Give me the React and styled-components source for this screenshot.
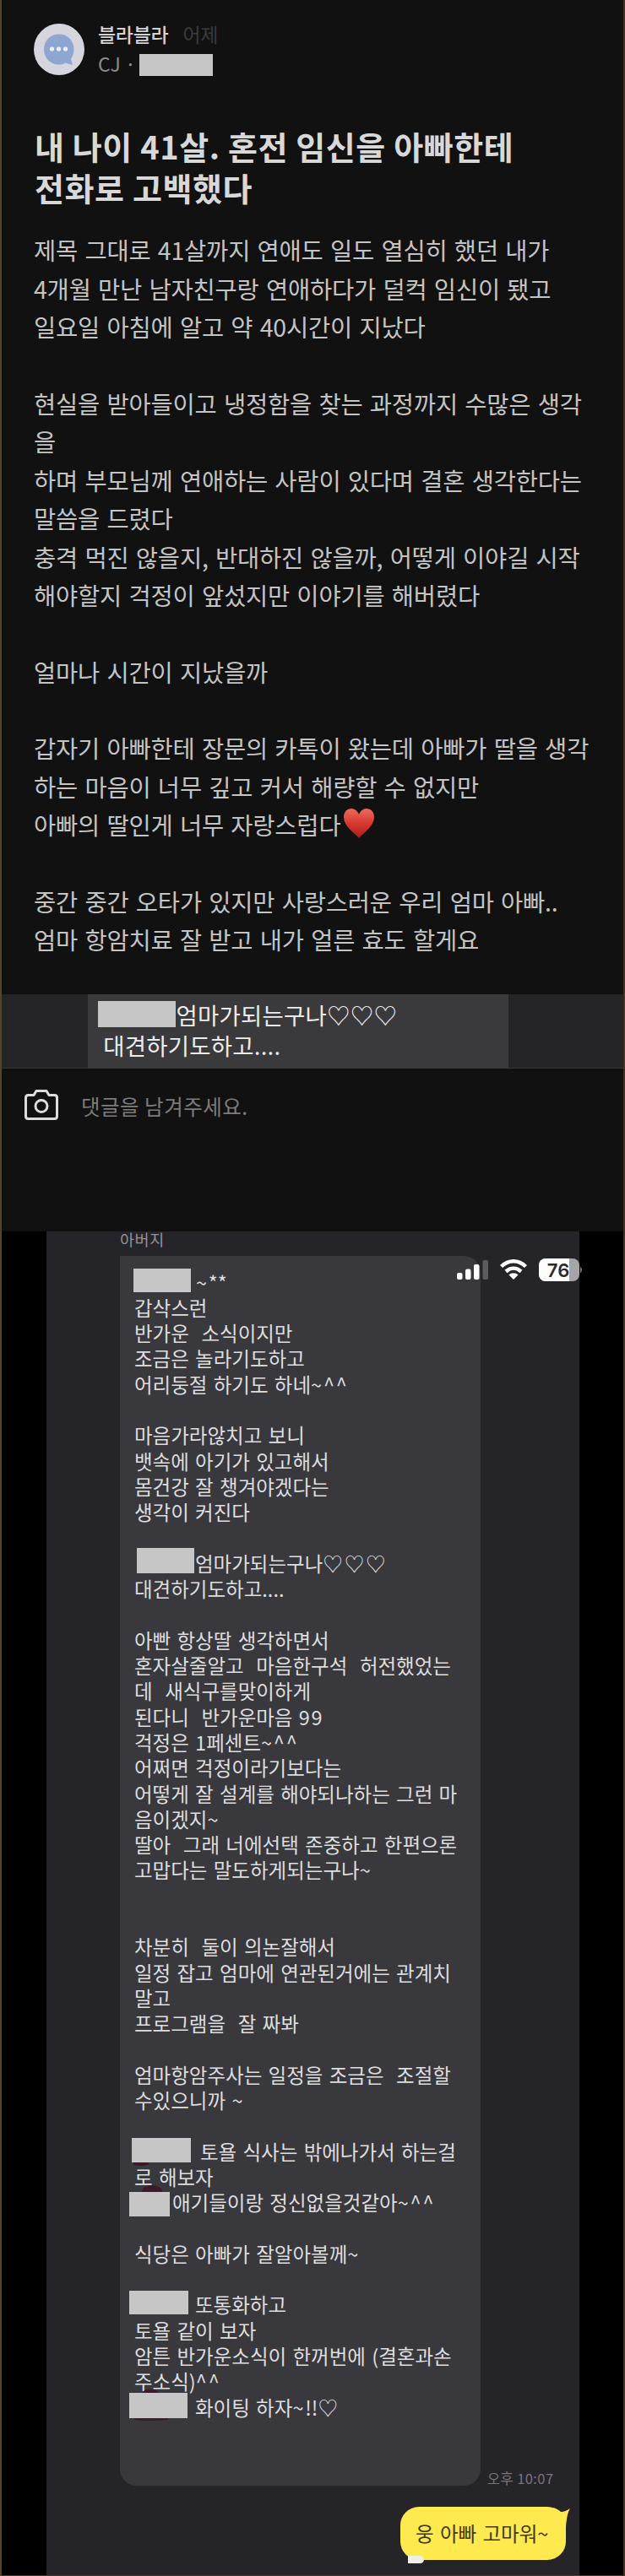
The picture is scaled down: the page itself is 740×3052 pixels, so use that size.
import React from "react";
import styled, { createGlobalStyle } from "styled-components";

const Global = createGlobalStyle`
  * { box-sizing: border-box; }
  body { margin: 0; background: #111111; font-family: "Noto Sans CJK KR", "Noto Sans", sans-serif; }
`;

const Page = styled.div`
  width: 740px;
  height: 3052px;
  overflow: hidden;
  background: #000;
  border-left: 2px solid #5b4322;
  border-right: 2px solid #4a3017;
  border-bottom: 1px solid #463b1c;
`;

const Post = styled.article`
  height: 1459px;
  background: #111111;
`;

const Author = styled.header`
  display: flex;
  gap: 16px;
  padding: 28px 38px 0;
  height: 148px;
`;

const AuthorInfo = styled.div`
  display: flex;
  flex-direction: column;
`;

const NameRow = styled.div`
  display: flex;
  gap: 17px;
  height: 25px;
  line-height: 24px;
  font-size: 23px;
  letter-spacing: -0.3px;
  font-weight: 500;
  color: #d2d2d2;
`;

const When = styled.span`
  color: #3b3b3b;
  font-weight: 400;
`;

const CompanyRow = styled.div`
  display: flex;
  height: 26px;
  margin-top: 11px;
  line-height: 22px;
  font-size: 23px;
  color: #8b8b8b;
`;

const Company = styled.span`
  width: 48.5px;
  white-space: nowrap;
`;

const Mask = styled.span`
  position: relative;
  flex: none;
  width: ${(p) => p.$w}px;
  height: ${(p) => p.$h}px;
  margin: ${(p) => p.$top || 0}px ${(p) => p.$after || 0}px 0 ${(p) => p.$left || 0}px;
  background: #c6c6c6;
`;

/* Dark red sliver of the sticker peeking out above or below a mask */
const Smudge = styled.i`
  position: absolute;
  left: ${(p) => p.$x}px;
  width: ${(p) => p.$w}px;
  height: ${(p) => p.$h}px;
  background: #3b1b2a;
  ${(p) => (p.$below ? "top: 100%; border-radius: 0 0 50% 50%;" : "bottom: 100%; border-radius: 50% 50% 0 0 / 100% 100% 0 0;")}
`;

const Title = styled.h1`
  margin: 0;
  padding-left: 39px;
  font-size: 38px;
  line-height: 49px;
  letter-spacing: 0.6px;
  font-weight: 700;
  color: #d8d8d8;
`;

const TextLine = styled.div`
  height: ${(p) => p.$pitch}px;
  line-height: ${(p) => p.$pitch}px;
  white-space: pre;
  display: flex;
`;

const Body = styled.section`
  margin-top: 27.4px;
  padding-left: 38px;
  font-size: 28.5px;
  letter-spacing: -0.2px;
  word-spacing: 2.2px;
  color: #c4c4c4;
`;

const Heart = styled.svg`
  width: 38px;
  height: 37px;
  margin: 3px 0 0 3px;
`;

const QuoteStrip = styled.section`
  display: flex;
  height: 88px;
  margin-top: 42px;
  padding-left: 102px;
  background: #252527;
  border-bottom: 1px solid #38383a;
`;

const Quote = styled.div`
  width: 498px;
  height: 87px;
  padding: 6px 0 0 12px;
  background: #3a3a3c;
  color: #ececec;
  font-size: 27.5px;
`;

const QuoteText = styled.span`
  letter-spacing: 0.2px;
`;

const CommentBar = styled.footer`
  display: flex;
  padding: 25px 27px 0;
  gap: 27px;
  color: #7c7c7c;
  font-size: 24.5px;
  line-height: 39px;
  letter-spacing: 0.5px;
`;

const Chat = styled.main`
  width: 631px;
  height: 1592px;
  margin-left: 53px;
  background: #252429;
  position: relative;
`;

const Sender = styled.div`
  height: 29px;
  padding-left: 87px;
  line-height: 19px;
  font-size: 18.5px;
  letter-spacing: 0.6px;
  color: #929196;
`;

const MessageRow = styled.div`
  display: flex;
  align-items: flex-end;
  padding-left: 87px;
`;

const Message = styled.div`
  width: 427px;
  height: 1457px;
  padding: 15.6px 0 0 17px;
  border-radius: 0 20px 20px 20px;
  background: #39383d;
  color: #dededf;
  font-size: 23.5px;
  word-spacing: 2px;
`;

const Wide = styled.span`
  letter-spacing: 1.8px;
`;

const Time = styled.time`
  padding: 0 0 0 8px;
  font-size: 16.5px;
  line-height: 18px;
  letter-spacing: 0.4px;
  color: #77767b;
  white-space: nowrap;
`;

const StatusBar = styled.div`
  position: absolute;
  top: 31px;
  left: 484.5px;
  display: flex;
  align-items: center;
`;

const Reply = styled.div`
  position: relative;
  width: 196px;
  height: 63px;
  margin: 25px 0 0 419px;
  padding-left: 18px;
  border-radius: 22px;
  background: #fee94e;
  color: #40391d;
  font-size: 23.5px;
  line-height: 62px;
  word-spacing: 2px;
  white-space: nowrap;
`;

const Tail = styled.svg`
  position: absolute;
  top: 0;
  right: -5px;
`;

const Scrap = styled.i`
  position: absolute;
  left: 9px;
  bottom: -4px;
  width: 19px;
  height: 9px;
  border-radius: 0 6px 6px 0;
  background: #efefe9;
`;

const BODY = [
  "제목 그대로 41살까지 연애도 일도 열심히 했던 내가",
  "4개월 만난 남자친구랑 연애하다가 덜컥 임신이 됐고",
  "일요일 아침에 알고 약 40시간이 지났다",
  "",
  "현실을 받아들이고 냉정함을 찾는 과정까지 수많은 생각",
  "을",
  "하며 부모님께 연애하는 사람이 있다며 결혼 생각한다는",
  "말씀을 드렸다",
  "충격 먹진 않을지, 반대하진 않을까, 어떻게 이야길 시작",
  "해야할지 걱정이 앞섰지만 이야기를 해버렸다",
  "",
  "얼마나 시간이 지났을까",
  "",
  "갑자기 아빠한테 장문의 카톡이 왔는데 아빠가 딸을 생각",
  "하는 마음이 너무 깊고 커서 해량할 수 없지만",
  { text: "아빠의 딸인게 너무 자랑스럽다", heart: true },
  "",
  "중간 중간 오타가 있지만 사랑스러운 우리 엄마 아빠..",
  "엄마 항암치료 잘 받고 내가 얼른 효도 할게요",
];

const MESSAGE = [
  { mask: { $w: 68, $h: 27.5, $left: -1, $top: -0.5, $after: 6 }, text: "~**" },
  "갑삭스런",
  "반가운  소식이지만",
  "조금은 놀라기도하고",
  "어리둥절 하기도 하네~^^",
  "",
  "마음가라않치고 보니",
  "뱃속에 아기가 있고해서",
  "몸건강 잘 챙겨야겠다는",
  "생각이 커진다",
  "",
  { mask: { $w: 68.5, $h: 29.5, $left: 2.5, $top: -2.5, $after: 1 }, text: "엄마가되는구나♡♡♡" },
  "대견하기도하고....",
  "",
  "아빤 항상딸 생각하면서",
  "혼자살줄알고  마음한구석  허전했었는",
  "데  새식구를맞이하게",
  "된다니  반가운마음 99",
  "걱정은 1페센트~^^",
  "어쩌면 걱정이라기보다는",
  "어떻게 잘 설계를 해야되나하는 그런 마",
  "음이겠지~",
  "딸아  그래 너에선택 존중하고 한편으론",
  "고맙다는 말도하게되는구나~",
  "",
  "",
  "차분히  둘이 의논잘해서",
  "일정 잡고 엄마에 연관된거에는 관계치",
  "말고",
  "프로그램을  잘 짜봐",
  "",
  "엄마항암주사는 일정을 조금은  조절할",
  "수있으니까 ~",
  "",
  {
    mask: { $w: 70, $h: 29, $left: -3, $top: -0.5, $after: 11 },
    smudges: [{ $x: 2, $w: 18, $h: 4, $below: true }],
    text: "토욜 식사는 밖에나가서 하는걸",
  },
  "로 해보자",
  {
    mask: { $w: 48, $h: 29, $left: -6, $top: 2.5, $after: 3 },
    smudges: [{ $x: 15, $w: 24, $h: 8 }],
    text: "애기들이랑 정신없을것같아~^^",
  },
  "",
  "식당은 아빠가 잘알아볼께~",
  "",
  { mask: { $w: 70, $h: 28, $left: -6, $top: -1.5, $after: 8 }, text: "또통화하고" },
  "토욜 같이 보자",
  "암튼 반가운소식이 한꺼번에 (결혼과손",
  "주소식)^^",
  {
    mask: { $w: 69, $h: 30, $left: -6, $top: -1.5, $after: 9 },
    smudges: [{ $x: 15, $w: 20, $h: 4 }, { $x: 6, $w: 40, $h: 3, $below: true }],
    text: "화이팅 하자~!!♡",
  },
];

function Lines({ items, pitch, widen }) {
  return items.map((item, i) => {
    const line = typeof item === "string" ? { text: item } : item;
    return (
      <TextLine key={i} $pitch={pitch}>
        {line.mask && (
          <Mask {...line.mask}>
            {(line.smudges || []).map((s, k) => <Smudge key={k} {...s} />)}
          </Mask>
        )}
        <span>
          {widen
            ? line.text.split(/([~^♡9]+)/).map((part, k) => (k % 2 ? <Wide key={k}>{part}</Wide> : part))
            : line.text}
        </span>
        {line.heart && <RedHeart />}
      </TextLine>
    );
  });
}

function RedHeart() {
  return (
    <Heart viewBox="0 0 38 37">
      <defs>
        <linearGradient id="heart" x1="0" y1="0" x2="0" y2="1">
          <stop offset="0" stopColor="#ee6a5c" />
          <stop offset="0.5" stopColor="#d8392f" />
          <stop offset="1" stopColor="#a81f1c" />
        </linearGradient>
      </defs>
      <path fill="url(#heart)" d="M19 36C13 29 1 22 1 11C1 5 5 1 10 1C14 1 17.500 4 19 8C20.500 4 24 1 28 1C33 1 37 5 37 11C37 22 25 29 19 36Z" />
    </Heart>
  );
}

function Avatar() {
  return (
    <svg width="60" height="61" viewBox="0 0 60 61">
      <ellipse cx="30" cy="30.500" rx="30" ry="30.500" fill="#d5d5dd" />
      <path fill="#8fa6d0" d="M30 12.500C40 12.500 47.500 20 47.500 30.500C47.500 35 46 39 44 42L46 49L37.500 46.500C35 48 33 48.500 30 48.500C20 48.500 12 41 12 30.500C12 20 20 12.500 30 12.500Z" />
      <circle cx="21.500" cy="30" r="2.600" fill="#eef1fa" />
      <circle cx="29.500" cy="30" r="2.600" fill="#eef1fa" />
      <circle cx="37.500" cy="30" r="2.600" fill="#eef1fa" />
    </svg>
  );
}

function Camera() {
  return (
    <svg width="40" height="36" viewBox="0 0 40 36" fill="none" stroke="#dcdcdc" strokeWidth="3" strokeLinejoin="round">
      <path d="M4.500 6.500H11L14 1.500H26L29 6.500H35.500Q38.500 6.500 38.500 9.500V31.500Q38.500 34.500 35.500 34.500H4.500Q1.500 34.500 1.500 31.500V9.500Q1.500 6.500 4.500 6.500Z" />
      <circle cx="20" cy="19.500" r="7" />
    </svg>
  );
}

function Status() {
  return (
    <StatusBar>
      <svg width="151" height="28" viewBox="0 0 151 28">
        <rect x="1" y="18" width="6.500" height="8" rx="2" fill="#fff" />
        <rect x="11" y="13.500" width="6.500" height="12.500" rx="2" fill="#fff" />
        <rect x="21" y="8" width="6.500" height="18" rx="2" fill="#fff" />
        <rect x="31.500" y="3" width="6.500" height="23" rx="2" fill="#5c5b60" />
        <g fill="none" stroke="#fff" strokeWidth="4.500">
          <path d="M53.500 10.500C62 2 74 2 82.500 10.500" />
          <path d="M59 16.500C64.500 11.500 71.500 11.500 77 16.500" />
        </g>
        <path fill="#fff" d="M68 26L62.500 20.500C65.500 17.500 70.500 17.500 73.500 20.500Z" />
        <defs>
          <clipPath id="battery"><rect x="98" y="1" width="48" height="27" rx="8" /></clipPath>
        </defs>
        <g clipPath="url(#battery)">
          <rect x="98" y="1" width="48" height="27" fill="#a5a5a8" />
          <rect x="98" y="1" width="36" height="27" fill="#fff" />
        </g>
        <path d="M147 10.500Q151 14.500 147 18.500Z" fill="#77767b" />
        <text x="121" y="22.500" textAnchor="middle" fontFamily="Inter, sans-serif" fontSize="22" fontWeight="600" fill="#2b2a2f">76</text>
      </svg>
    </StatusBar>
  );
}

export default function App() {
  return (
    <>
      <Global />
      <Page>
        <Post>
          <Author>
            <Avatar />
            <AuthorInfo>
              <NameRow>블라블라 <When>어제</When></NameRow>
              <CompanyRow><Company>CJ ·</Company><Mask $w={87} $h={26} /></CompanyRow>
            </AuthorInfo>
          </Author>
          <Title>내 나이 41살. 혼전 임신을 아빠한테<br />전화로 고백했다</Title>
          <Body><Lines items={BODY} pitch={45.4} /></Body>
          <QuoteStrip>
            <Quote>
              <TextLine $pitch={36}><Mask $w={91.5} $h={31} $top={2} $after={1} /><QuoteText>엄마가되는구나♡♡♡</QuoteText></TextLine>
              <TextLine $pitch={36}><QuoteText> 대견하기도하고....</QuoteText></TextLine>
            </Quote>
          </QuoteStrip>
          <CommentBar><Camera />댓글을 남겨주세요.</CommentBar>
        </Post>
        <Chat>
          <Sender>아버지</Sender>
          <MessageRow>
            <Message><Lines items={MESSAGE} pitch={30.3} widen /></Message>
            <Time>오후 10:07</Time>
          </MessageRow>
          <Reply>
            웅 아빠 고마워~
            <Tail width="20" height="24" viewBox="0 0 20 24"><path fill="#fee94e" d="M0 1C4 2 7 4 9 6C13 6 17 4 20 2C17 7 16 13 15 24L4 18Z" /></Tail>
            <Scrap />
          </Reply>
          <Status />
        </Chat>
      </Page>
    </>
  );
}
